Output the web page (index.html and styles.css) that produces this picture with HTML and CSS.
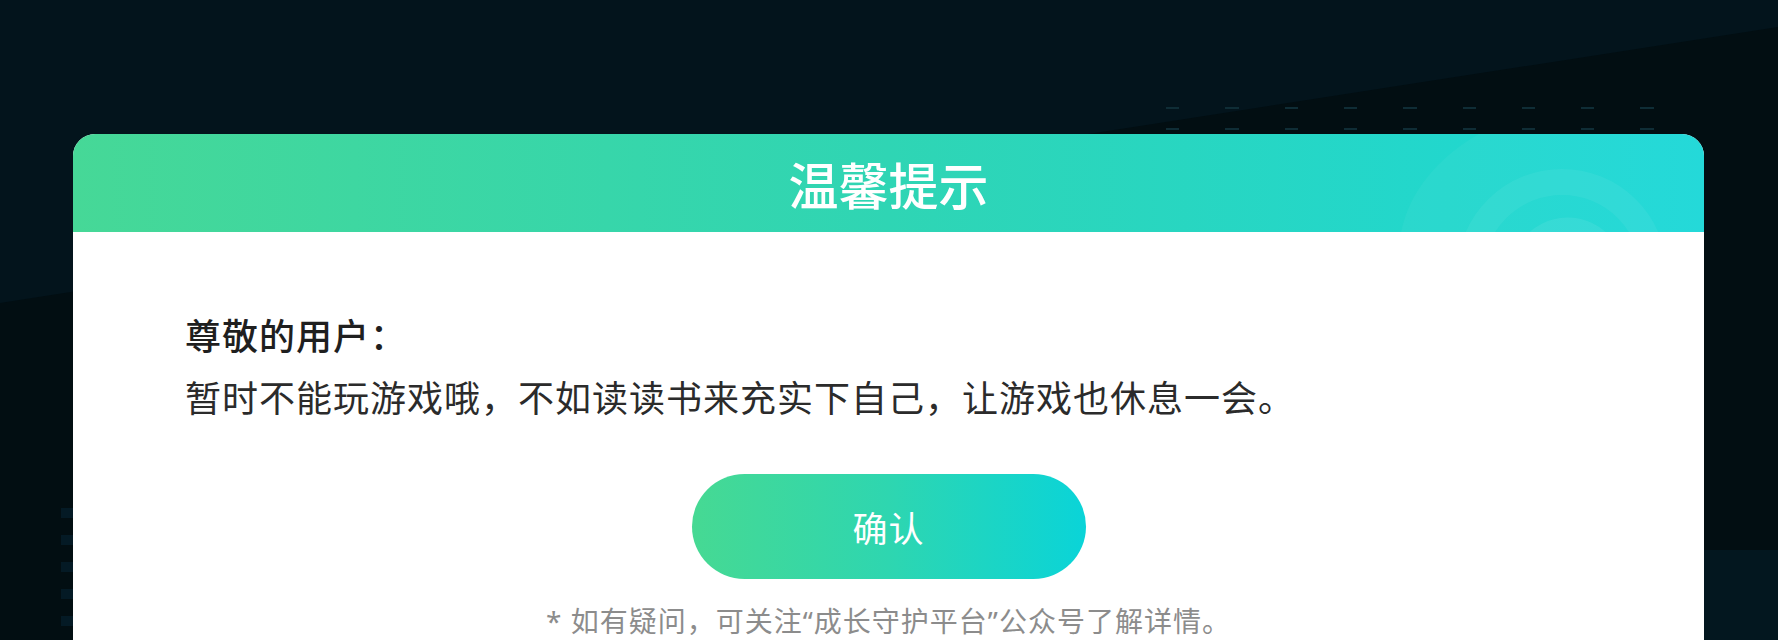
FILE: index.html
```html
<!DOCTYPE html>
<html lang="zh-CN">
<head>
<meta charset="utf-8">
<title>温馨提示</title>
<link rel="stylesheet" href="styles.css">
</head>
<body>
<div class="bg-band"></div>
<div class="bg-dashes bg-dashes-top"></div>
<div class="bg-dashes bg-dashes-bottom"></div>
<div class="bg-corner"></div>
<div class="bg-dots"><span></span><span></span><span></span><span></span><span></span></div>
<main class="page">
  <section class="dialog">
    <header class="dialog-head">
      <svg class="head-deco" viewBox="0 0 330 98" aria-hidden="true">
        <ellipse cx="225" cy="120" rx="200" ry="150" fill="#ffffff" fill-opacity="0.04"/>
        <circle cx="188" cy="140" r="92" fill="none" stroke="#ffffff" stroke-opacity="0.05" stroke-width="26"/>
        <path d="M 228 110 A 46 46 0 1 0 170 180" fill="none" stroke="#ffffff" stroke-opacity="0.07" stroke-width="22" stroke-linecap="round"/>
      </svg>
      <h1 class="dialog-title">温馨提示</h1>
    </header>
    <div class="dialog-body">
      <p class="greet">尊敬的用户：</p>
      <p class="msg">暂时不能玩游戏哦，不如读读书来充实下自己，让游戏也休息一会。</p>
      <div class="actions">
        <button class="btn-confirm" type="button">确认</button>
      </div>
      <p class="note">* 如有疑问，可关注“成长守护平台”公众号了解详情。</p>
    </div>
  </section>
</main>
</body>
</html>
```

FILE: styles.css
```css
html, body {
  margin: 0;
  padding: 0;
}

body {
  position: relative;
  width: 1778px;
  height: 640px;
  overflow: hidden;
  background: #020e12;
  font-family: "Noto Sans CJK SC", "Noto Sans", sans-serif;
}

.bg-band {
  position: absolute;
  inset: 0;
  background: #03141c;
  clip-path: polygon(0 0, 100% 0, 100% 27px, 0 303px);
}

.bg-dashes {
  position: absolute;
  left: 1120px;
  width: 556px;
  height: 2px;
  background: repeating-linear-gradient(to right, transparent 0 46px, #0f2d36 46px 59.3px);
}

.bg-dashes-top { top: 107px; }
.bg-dashes-bottom { top: 128px; }

.bg-corner {
  position: absolute;
  left: 1704px;
  top: 550px;
  right: 0;
  bottom: 0;
  background: #03171f;
}

.bg-dots {
  position: absolute;
  left: 61px;
  top: 508px;
  display: flex;
  flex-direction: column;
  gap: 17px;
}

.bg-dots span {
  display: block;
  width: 12px;
  height: 10px;
  background: #041a25;
}

.page {
  position: relative;
  padding-top: 134px;
}

.dialog {
  margin: 0 74px 0 73px;
  background: #ffffff;
  border-radius: 22px 22px 0 0;
  overflow: hidden;
}

.dialog-head {
  position: relative;
  height: 98px;
  display: flex;
  align-items: center;
  justify-content: center;
  background: linear-gradient(to right, #46d897 0%, #2fd5b4 50%, #1cd8d8 100%);
}

.head-deco {
  position: absolute;
  right: 0;
  top: 0;
  width: 330px;
  height: 98px;
}

.dialog-title {
  position: relative;
  margin: 0;
  font-size: 50px;
  font-weight: 500;
  line-height: 1;
  color: #ffffff;
}

.dialog-body {
  padding: 71px 112px 60px 112px;
}

.greet {
  margin: 0;
  font-size: 36px;
  line-height: 62px;
  font-weight: 500;
  letter-spacing: 1px;
  color: #1f1f1f;
}

.msg {
  margin: 0;
  font-size: 36px;
  line-height: 62px;
  font-weight: 400;
  letter-spacing: 1px;
  color: #2b2b2b;
}

.actions {
  display: flex;
  justify-content: center;
  margin-top: 47px;
  margin-left: -112px;
  margin-right: -112px;
}

.btn-confirm {
  width: 394px;
  height: 105px;
  border: 0;
  border-radius: 53px;
  padding: 0;
  background: linear-gradient(to right, #46d993 0%, #2ed6b0 50%, #0ad4d8 100%);
  color: #ffffff;
  font-family: "Noto Sans CJK SC", sans-serif;
  font-size: 35px;
  font-weight: 400;
  letter-spacing: 1px;
  cursor: pointer;
}

.note {
  margin: 22px -112px 0 -112px;
  text-align: center;
  font-family: "Noto Sans", "Noto Sans CJK SC", sans-serif;
  font-size: 28px;
  line-height: 40px;
  letter-spacing: 1px;
  color: #8c8c8c;
}
```
